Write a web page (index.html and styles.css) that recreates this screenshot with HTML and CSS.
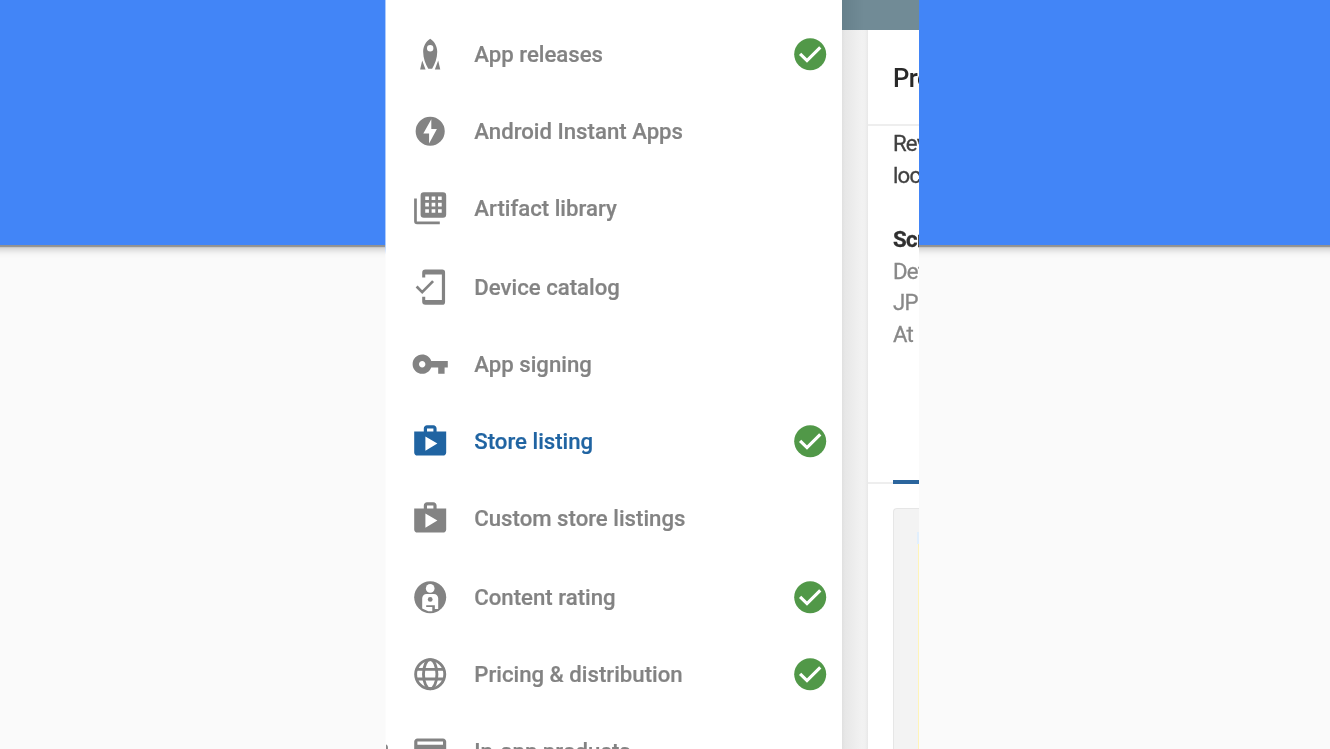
FILE: index.html
```html
<!DOCTYPE html>
<html lang="en">
<head>
<meta charset="utf-8">
<title>Play Console menu</title>
<link rel="stylesheet" href="styles.css">
</head>
<body>
<svg class="defs" aria-hidden="true">
  <symbol id="check" viewBox="0 0 24 24"><circle cx="12" cy="12" r="10" fill="#519848"/><path d="M5.700 11.800L10 16l8.300-8.300" fill="none" stroke="#fff" stroke-width="2"/></symbol>
  <symbol id="bag" viewBox="0 0 24 24"><path d="M16 6V4c0-1.110-.890-2-2-2h-4c-1.110 0-2 .890-2 2v2H2v13c0 1.110.890 2 2 2h16c1.110 0 2-.890 2-2V6h-6zm-6-2h4v2h-4V4zM9 18V9l7.500 4.500L9 18z" fill-rule="evenodd"/></symbol>
</svg>
<div class="page">
  <div class="side"><div class="band"></div></div>
  <main class="shot">
    <nav class="menu">
      <a class="item"><svg class="icon" viewBox="0 0 24 24"><path fill-rule="evenodd" d="M12 2.300c2.900 1.900 4.400 4.800 4.400 8.200 0 4-1.500 7.700-3.200 10.600h-2.400C9.100 18.200 7.600 14.500 7.600 10.500c0-3.400 1.500-6.300 4.400-8.200zm0 4a2 2 0 1 0 0 4 2 2 0 0 0 0-4zM7 16l2.100 5.600H5.700zM17 16l-2.100 5.600h3.400z"/></svg><span class="label">App releases</span><svg class="icon"><use href="#check"/></svg></a>
      <a class="item"><svg class="icon" viewBox="0 0 24 24"><path fill-rule="evenodd" d="M12 2.900a9.100 9.100 0 1 0 0 18.200 9.100 9.100 0 0 0 0-18.200zM11.300 19.700v-6.300H7.700L12.700 4.500v6.200h3.500z"/></svg><span class="label">Android Instant Apps</span></a>
      <a class="item gap"><svg class="icon" viewBox="0 0 24 24"><path d="M2.800 6v14.200c0 .600.400 1 1 1H18" fill="none" stroke="currentColor" stroke-width="1.700"/><path fill-rule="evenodd" d="M8 2h12a2 2 0 0 1 2 2v12a2 2 0 0 1-2 2H8a2 2 0 0 1-2-2V4a2 2 0 0 1 2-2zm.900 2.700v2.200h2.300V4.700zm4 0v2.200h2.300V4.700zm4 0v2.200h2.300V4.700zm-8 3.900v2.300h2.300V8.600zm4 0v2.300h2.300V8.600zm4 0v2.300h2.300V8.600zm-8 4v2.300h2.300v-2.300zm4 0v2.300h2.300v-2.300zm4 0v2.300h2.300v-2.300z"/></svg><span class="label">Artifact library</span></a>
      <a class="item"><svg class="icon" viewBox="0 0 24 24"><path fill-rule="evenodd" d="M9 1h10.500A1.800 1.800 0 0 1 21.300 2.800V21.200A1.800 1.800 0 0 1 19.500 23H9a2 2 0 0 1-2-2v-3h1.900v2h10.400V4H8.900v2H7V3a2 2 0 0 1 2-2z"/><path d="M3.500 11.600l3.500 3.500 6.800-6.900" fill="none" stroke="currentColor" stroke-width="1.700"/></svg><span class="label">Device catalog</span></a>
      <a class="item"><svg class="icon" viewBox="0 0 24 24"><path d="M12.650 10C11.830 7.670 9.610 6 7 6c-3.310 0-6 2.690-6 6s2.690 6 6 6c2.610 0 4.830-1.670 5.650-4H17v4h4v-4h2v-4H12.650zM7 14c-1.100 0-2-.900-2-2s.900-2 2-2 2 .900 2 2-.900 2-2 2z"/></svg><span class="label">App signing</span></a>
      <a class="item active"><svg class="icon"><use href="#bag"/></svg><span class="label">Store listing</span><svg class="icon"><use href="#check"/></svg></a>
      <a class="item gap"><svg class="icon"><use href="#bag"/></svg><span class="label">Custom store listings</span></a>
      <a class="item"><svg class="icon" viewBox="0 0 24 24"><circle cx="12" cy="12" r="10"/><circle cx="12" cy="6.500" r="2.700" fill="#fff"/><path d="M9.700 10h4.600a2.700 2.700 0 0 1 2.700 2.700v6.700h-2.100V17H9.500v1.200h3.800v2.600h-2.500L7 19v-6.300A2.700 2.700 0 0 1 9.700 10z" fill="#fff"/><circle cx="12" cy="13.400" r="1.500"/></svg><span class="label">Content rating</span><svg class="icon"><use href="#check"/></svg></a>
      <a class="item"><svg class="icon" viewBox="0 0 24 24"><g fill="none" stroke="currentColor" stroke-width="1.800"><circle cx="12" cy="12" r="9.100"/><ellipse cx="12" cy="12" rx="4.200" ry="9.100"/><path d="M3.500 9h17M3.500 15h17"/></g></svg><span class="label">Pricing &amp; distribution</span><svg class="icon"><use href="#check"/></svg></a>
      <a class="item"><svg class="icon" viewBox="0 0 24 24"><path fill-rule="evenodd" d="M20 4H4c-1.110 0-1.990.890-1.990 2L2 18c0 1.110.890 2 2 2h16c1.110 0 2-.890 2-2V6c0-1.110-.890-2-2-2zm0 14H4v-6h16v6zm0-10H4V6h16v2z"/></svg><span class="label">In-app products</span></a>
      <span class="knob"></span>
    </nav>
    <section class="behind">
      <div class="appbar"></div>
      <div class="under">
        <div class="gutter"></div>
        <article class="card">
          <h1 class="title">Pro</h1>
          <div class="copy">
            <p class="line">Rev</p>
            <p class="line">loc</p>
            <p class="line strong">Scr</p>
            <p class="line faint">Def</p>
            <p class="line faint">JPE</p>
            <p class="line faint">At l</p>
          </div>
          <div class="tabs"><span class="tab"></span></div>
          <div class="preview"><div class="spot"></div><div class="image"></div></div>
        </article>
      </div>
    </section>
  </main>
  <div class="side"><div class="band"></div></div>
</div>
</body>
</html>
```
FILE: styles.css
```css
* { box-sizing: border-box; }
body { margin: 0; background: #fafafa; font-family: Roboto, "Liberation Sans", sans-serif; overflow: hidden; }
.defs { display: none; }
.page { display: grid; grid-template-columns: 385px 534px 411px; height: 749px; }
.side { overflow: hidden; }
.band { height: 245px; margin: 0 -12px; background: #4285f7; box-shadow: 0 2px 1px rgba(0,0,0,.28), 0 4px 8px rgba(0,0,0,.24); }
.shot { display: flex; height: 749px; overflow: hidden; background: #fff; border-left: 1px solid #fdfdfd; border-image: linear-gradient(#adcbfb 245px, #fcfcfc 255px) 1; }
.menu { position: relative; width: 456px; flex: none; padding-top: 15.800px; background: #fff; }
.item { display: flex; align-items: center; height: 77px; padding: 0 12.300px 0 24.600px; color: #838383; fill: currentColor; }
.item.gap { margin-bottom: 2px; }
.item.active { color: #2064a2; }
.icon { width: 38.400px; height: 38.400px; flex: none; filter: blur(.55px); }
.label { flex: 1; padding-left: 25.300px; font-size: 22.200px; line-height: 30px; font-weight: 500; filter: blur(.65px); -webkit-text-stroke: .2px currentColor; white-space: nowrap; }
.knob { position: absolute; left: -6px; top: 744px; width: 8px; height: 8px; border-radius: 50%; background: #888; filter: blur(.6px); }
.behind { flex: 1; min-width: 0; overflow: hidden; background: #f2f2f2; }
.appbar { height: 29.500px; background: linear-gradient(90deg, #66808b, #718b96 22px); }
.under { display: flex; height: 719.500px; }
.gutter { width: 25.500px; flex: none; background: linear-gradient(90deg, #e0e0e0, #e7e7e7 3px, #f2f2f2 20px, #f1f1f1 23px, #e8e8e8); }
.card { flex: 1; min-width: 0; overflow: hidden; background: #fff; }
.title { height: 96.500px; margin: 0; padding: 1.500px 0 0 25.500px; border-bottom: 2px solid #eee; font-size: 25.600px; line-height: 95px; font-weight: 500; letter-spacing: -.5px; color: #292929; filter: blur(.5px); }
.copy { height: 354.500px; padding: 2px 0 0 25.500px; }
.line { margin: 0; font-size: 22.200px; line-height: 31.700px; letter-spacing: -.8px; color: #414141; filter: blur(.55px); -webkit-text-stroke: .3px currentColor; white-space: nowrap; }
.strong { margin-top: 32.500px; font-weight: 700; letter-spacing: -.6px; color: #303030; }
.faint { color: #888; }
.tabs { height: 3px; padding-left: 25.500px; border-bottom: 2px solid #eee; display: flex; align-items: flex-end; }
.tab { flex: 1; height: 4px; flex-shrink: 0; margin-bottom: -2px; background: #2b659d; filter: blur(.5px); }
.preview { height: 260px; margin: 24.500px 0 0 25.500px; border: 1.500px solid #e6e6e6; border-right: 0; border-radius: 4px 0 0 0; background: #f3f3f3; display: flex; flex-direction: column; align-items: flex-end; padding-top: 23px; }
.spot { width: 2px; height: 12px; background: #e1effd; }
.image { width: 1.500px; flex: 1; background: #fff4b8; }
```
